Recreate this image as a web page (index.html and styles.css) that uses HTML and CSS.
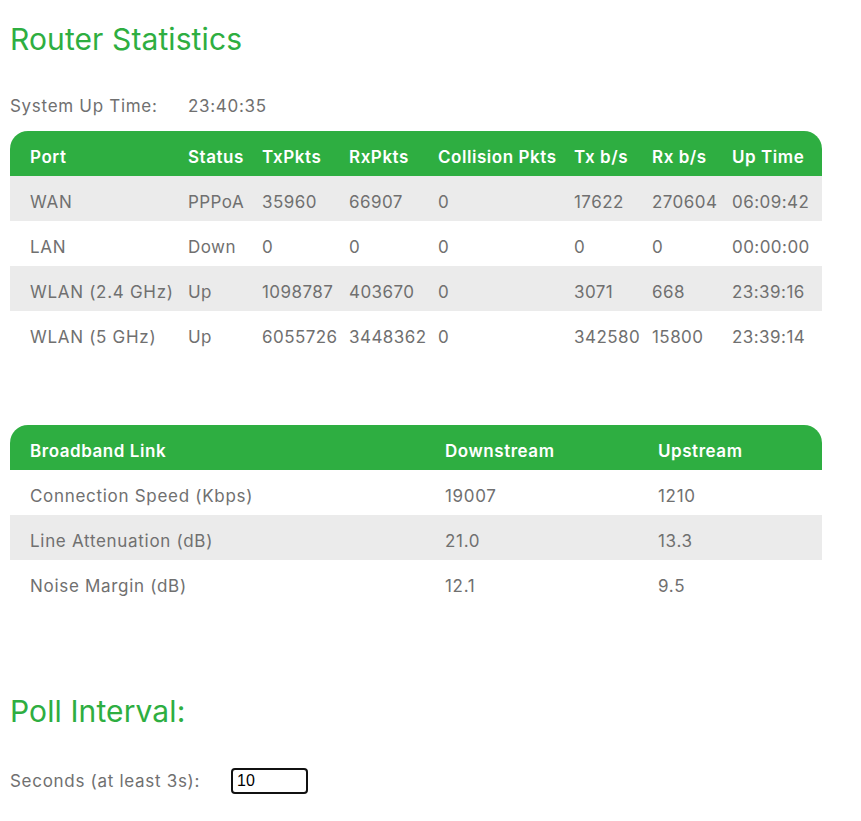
FILE: index.html
```html
<!DOCTYPE html>
<html>
<head>
<meta charset="utf-8">
<link rel="stylesheet" href="styles.css">
</head>
<body>
<h1 class="title">Router Statistics</h1>
<div class="uptime"><span class="label">System Up Time:</span><span>23:40:35</span></div>
<table class="stats ports">
<colgroup><col class="c1"><col class="c2"><col class="c3"><col class="c4"><col class="c5"><col class="c6"><col class="c7"><col class="c8"></colgroup>
<thead><tr><th>Port</th><th>Status</th><th>TxPkts</th><th>RxPkts</th><th>Collision Pkts</th><th>Tx b/s</th><th>Rx b/s</th><th>Up Time</th></tr></thead>
<tbody>
<tr class="alt"><td>WAN</td><td>PPPoA</td><td>35960</td><td>66907</td><td>0</td><td>17622</td><td>270604</td><td>06:09:42</td></tr>
<tr><td>LAN</td><td>Down</td><td>0</td><td>0</td><td>0</td><td>0</td><td>0</td><td>00:00:00</td></tr>
<tr class="alt"><td>WLAN (2.4 GHz)</td><td>Up</td><td>1098787</td><td>403670</td><td>0</td><td>3071</td><td>668</td><td>23:39:16</td></tr>
<tr><td>WLAN (5 GHz)</td><td>Up</td><td>6055726</td><td>3448362</td><td>0</td><td>342580</td><td>15800</td><td>23:39:14</td></tr>
</tbody>
</table>
<table class="stats link">
<colgroup><col class="d1"><col class="d2"><col class="d3"></colgroup>
<thead><tr><th>Broadband Link</th><th>Downstream</th><th>Upstream</th></tr></thead>
<tbody>
<tr><td>Connection Speed (Kbps)</td><td>19007</td><td>1210</td></tr>
<tr class="alt"><td>Line Attenuation (dB)</td><td>21.0</td><td>13.3</td></tr>
<tr><td>Noise Margin (dB)</td><td>12.1</td><td>9.5</td></tr>
</tbody>
</table>
<h2 class="title poll">Poll Interval:</h2>
<div class="interval"><label class="label2" for="secs">Seconds (at least 3s):</label><input id="secs" class="secs" type="text" value="10"></div>
</body>
</html>
```
FILE: styles.css
```css
body {
  margin: 0;
  padding: 0 10px;
  font-family: Inter, "Noto Sans", sans-serif;
  color: #707070;
  font-size: 17px;
  letter-spacing: 0.7px;
  background: #fff;
}
.title {
  color: #2eae41;
  font-weight: 400;
  font-size: 30px;
  letter-spacing: 0.1px;
  margin: 0;
  line-height: 36px;
}
h1.title { padding-top: 21px; }
.uptime {
  margin-top: 39px;
  height: 20px;
  line-height: 20px;
  display: flex;
}
.uptime .label { width: 178px; }
.stats {
  border-collapse: separate;
  border-spacing: 0;
  table-layout: fixed;
  width: 812px;
}
.ports { margin-top: 15px; }
.link { margin-top: 69px; }
.stats th {
  background: #2eae41;
  color: #fff;
  font-weight: 600;
  letter-spacing: 0.55px;
  text-align: left;
  height: 45px;
  padding: 7px 0 0 10px;
  box-sizing: border-box;
  white-space: nowrap;
}
.stats td {
  height: 45px;
  padding: 7px 0 0 10px;
  box-sizing: border-box;
  white-space: nowrap;
}
.num { letter-spacing: 0.3px; }
.stats th:first-child, .stats td:first-child { padding-left: 20px; }
.stats th:first-child { border-top-left-radius: 18px; }
.stats th:last-child { border-top-right-radius: 18px; }
.stats tr.alt td { background: #ebebeb; }
.ports td + td { letter-spacing: 0.45px; }
.c1 { width: 168px; }
.c2 { width: 74px; }
.c3 { width: 87px; }
.c4 { width: 89px; }
.c5 { width: 136px; }
.c6 { width: 78px; }
.c7 { width: 80px; }
.c8 { width: 100px; }
.d1 { width: 425px; }
.d2 { width: 213px; }
.d3 { width: 174px; }
.poll { margin-top: 88px; }
.interval {
  margin-top: 39px;
  display: flex;
  align-items: center;
}
.label2 { width: 221px; }
.secs {
  box-sizing: border-box;
  width: 77px;
  height: 26px;
  border: 2px solid #111;
  border-radius: 4px;
  padding: 0 4px;
  font-family: "Liberation Sans", Arial, sans-serif;
  font-size: 16px;
  letter-spacing: 0;
  color: #000;
  outline: none;
}
```
